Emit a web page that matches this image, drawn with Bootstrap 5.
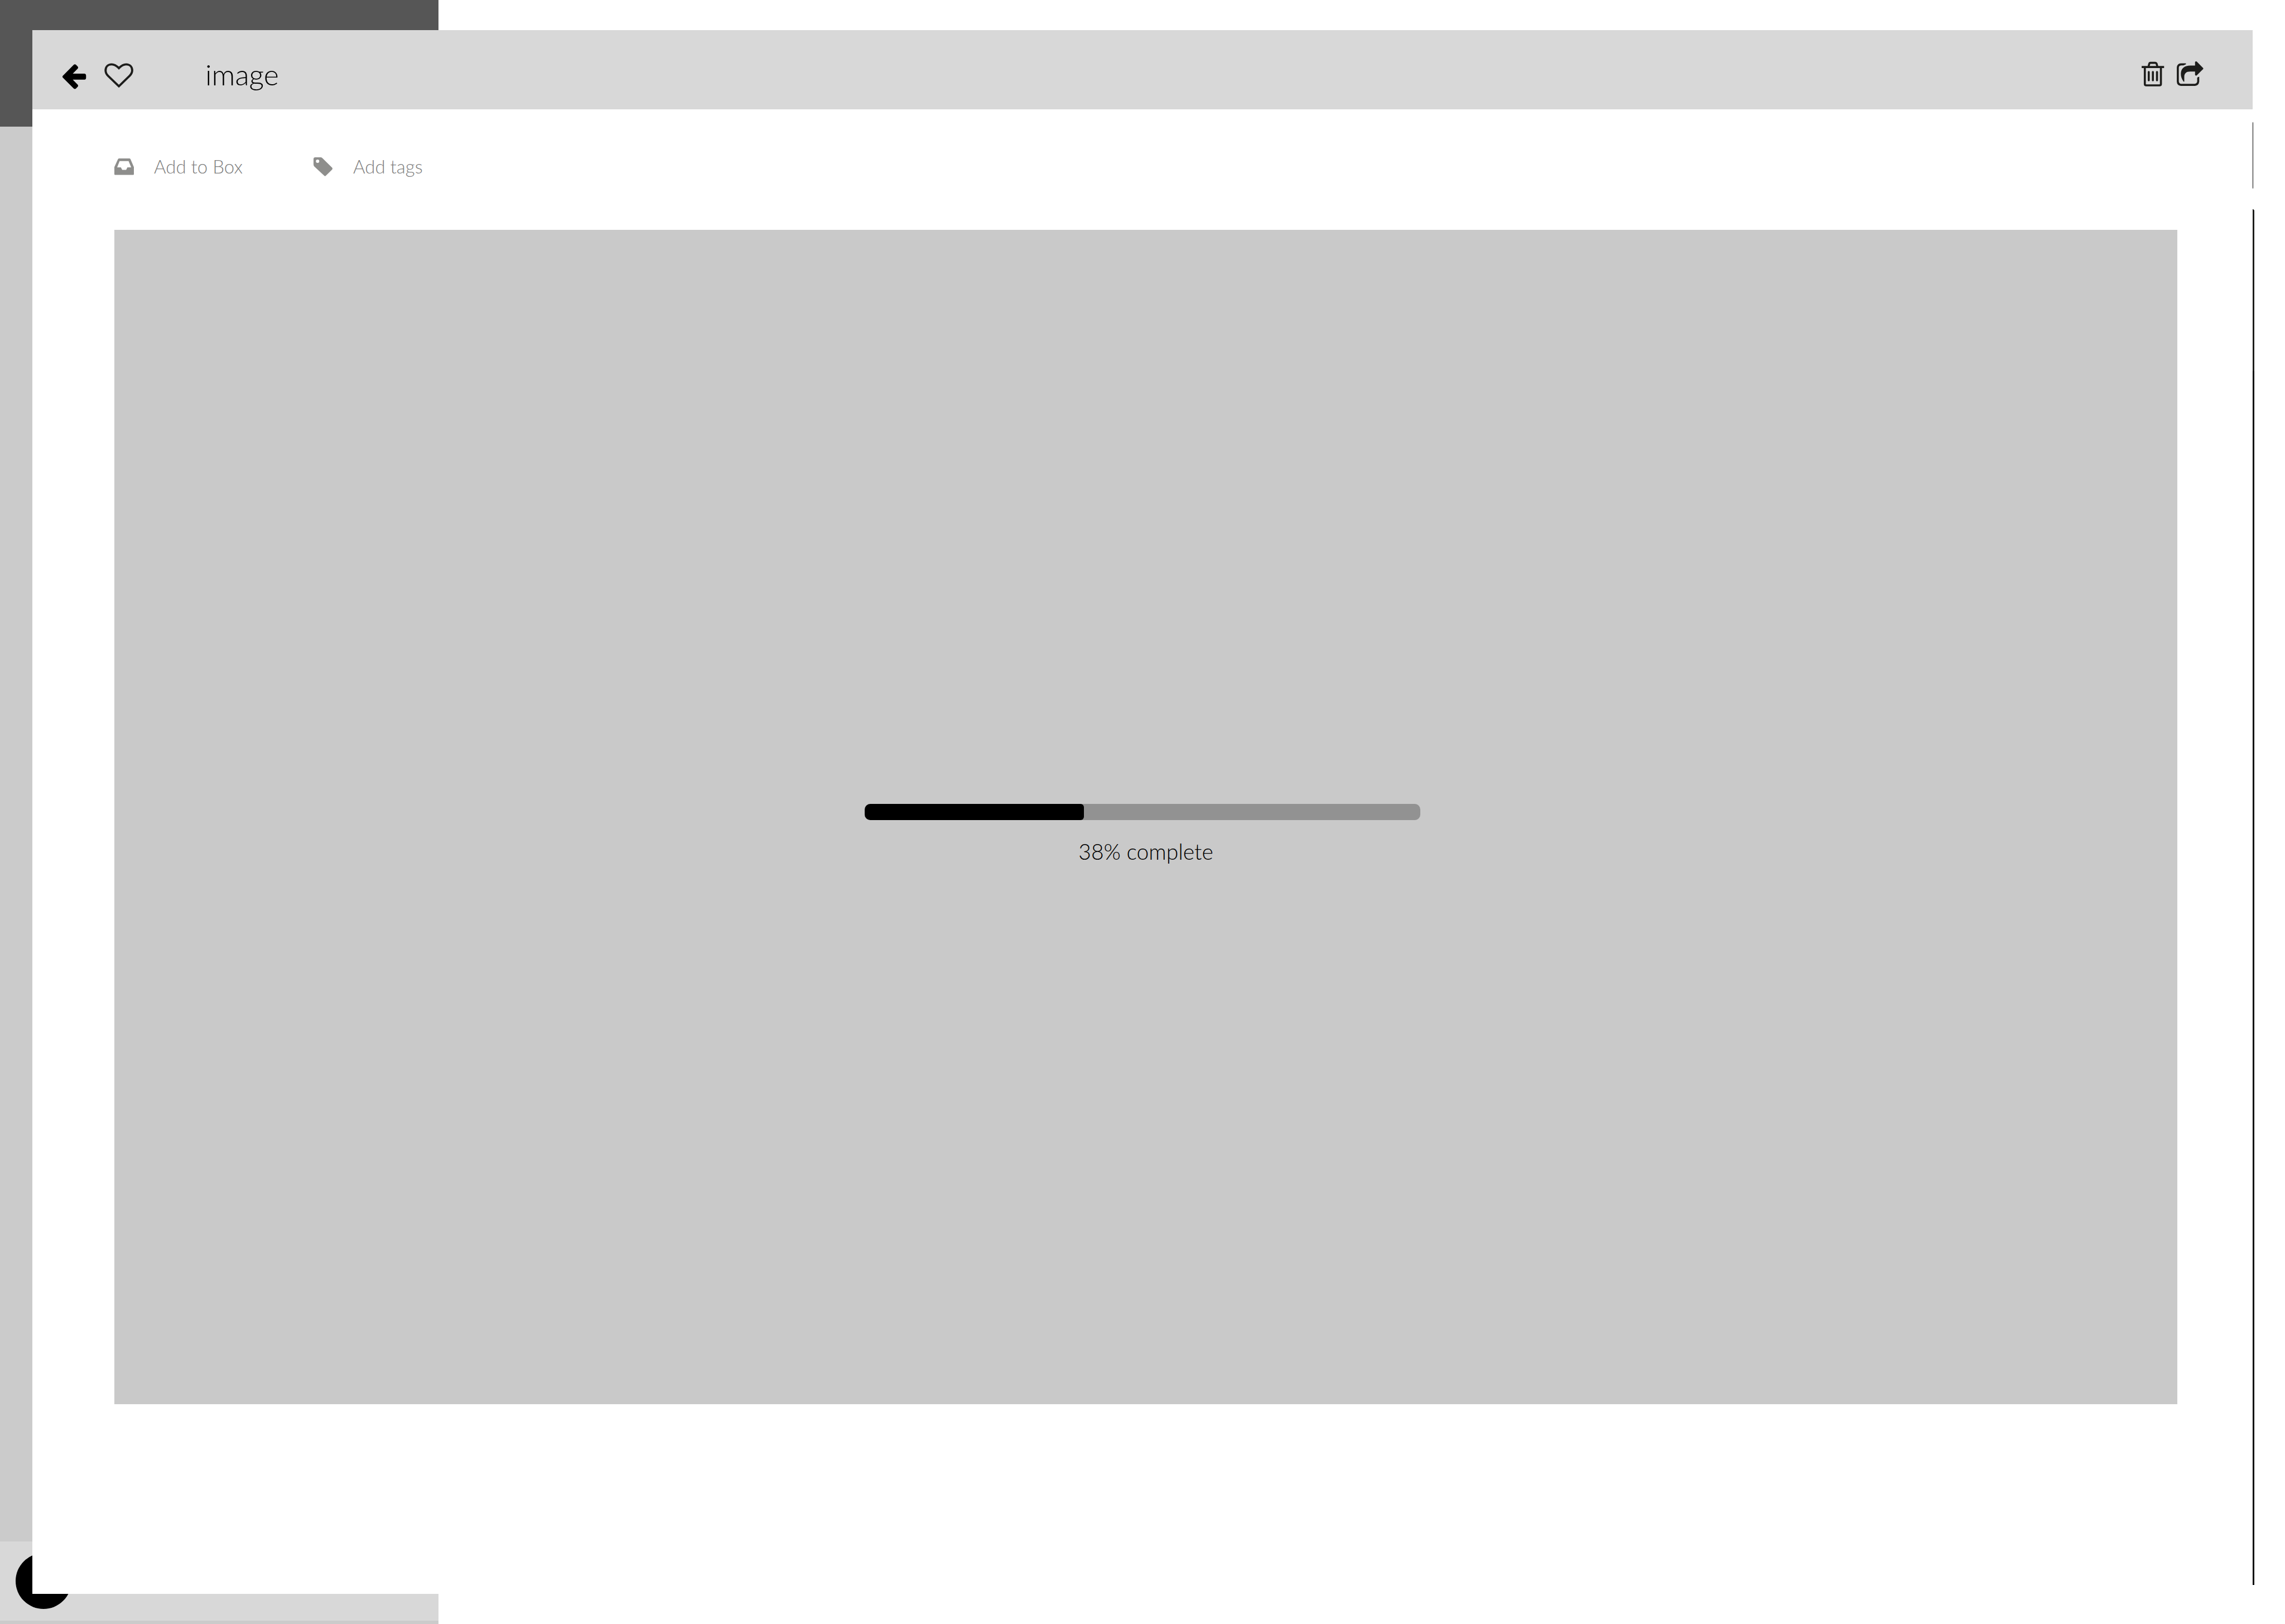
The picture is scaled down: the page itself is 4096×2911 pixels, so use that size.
<!DOCTYPE html>
<html lang="en">
<head>
<meta charset="utf-8">
<meta name="viewport" content="width=device-width, initial-scale=1">
<title>image</title>
<link href="https://cdn.jsdelivr.net/npm/bootstrap@5.3.0/dist/css/bootstrap.min.css" rel="stylesheet">
<style>
  body { font-family: Lato, "Liberation Sans", sans-serif; font-weight: 300; color: #000; background: #fff; }
  .btn { --bs-btn-padding-x: 0; --bs-btn-padding-y: 0; --bs-btn-border-width: 0; --bs-btn-font-weight: 300; --bs-btn-line-height: 1.2; --bs-btn-color: #1d1d1b; }
  svg { display: block; flex: none; }

  /* page behind the sheet */
  .side-pane { width: 786px; background: #cbcbcb; }
  .side-head { height: 227px; background: #565656; }
  .side-foot { height: 148px; background: #d8d8d8; border-bottom: 6px solid #cbcbcb; padding: 21px 28px; }
  .round-btn { width: 100px; height: 100px; background: #000; }
  .rail { padding: 218px 55px 70px 0; gap: 36px; }
  .rail-search { width: 12px; height: 121px; margin-right: 2px; background: #000; border-radius: 3px; }
  .rail-list { width: 12px; background: #000; border-radius: 4px 4px 0 0; overflow: hidden; }
  .rail-thumb { height: 290px; background: #1d1d1b; }

  /* sheet */
  .sheet { inset: 54px 58px; background: #fff; }
  .sheet-head { height: 142px; background: #d8d8d8; padding: 20px 88px 0 54px; }
  .head-left { gap: 32px; }
  .head-right { gap: 22px; }
  .sheet-title { font-size: 52px; line-height: 62px; font-weight: 300; margin-left: 97px; }
  .sheet-tools { height: 216px; padding: 0 147px 10px; gap: 127px; }
  .tool-btn { --bs-btn-color: #7f7f7f; --bs-btn-font-size: 33px; gap: 36px; }
  .tool-btn svg { fill: #8e8e8c; }
  .preview { margin: 0 135px 340px 147px; background: #c9c9c9; padding-top: 62px; }
  .upload-bar { --bs-progress-height: 29px; --bs-progress-bg: #929292; --bs-progress-border-radius: 10px; --bs-progress-bar-bg: #000; width: 996px; margin-right: 12px; }
  .upload-bar .progress-bar { border-radius: 6px; }
  .upload-text { font-size: 39px; line-height: 48px; margin-top: 32px; }
</style>
<script src="https://cdn.jsdelivr.net/npm/bootstrap@5.3.0/dist/js/bootstrap.bundle.min.js"></script>
</head>
<body>
<div class="vh-100 position-relative overflow-hidden">
  <div class="h-100 d-flex justify-content-between">
    <aside class="side-pane d-flex flex-column">
      <div class="side-head"></div>
      <div class="side-foot mt-auto">
        <button type="button" class="btn round-btn rounded-circle" aria-label="Add"></button>
      </div>
    </aside>
    <div class="rail d-flex flex-column align-items-end">
      <div class="rail-search"></div>
      <div class="rail-list flex-grow-1"><div class="rail-thumb"></div></div>
    </div>
  </div>

  <main class="sheet position-absolute d-flex flex-column">
    <header class="sheet-head d-flex align-items-center justify-content-between">
      <div class="head-left d-flex align-items-center">
        <button type="button" class="btn" aria-label="Back">
          <svg width="43" height="52" viewBox="101 89 189 229"><path d="M103 208 190 120Q198 113 207 120L221 134Q228 142 221 151L182 190H273Q287 191 287 206V222Q287 237 275 238H182L221 277Q228 285 221 294L207 308Q198 315 190 308L103 221Q98 214 103 208Z"/></svg>
        </button>
        <button type="button" class="btn" aria-label="Favourite">
          <svg width="52" height="52" viewBox="431 89 229 229"><path fill="none" stroke="#1d1d1b" stroke-width="17" d="M546 290 460 207C445 192 441 182 441 165C441 136 460 117 489 117C511 117 524 125 546 147C568 125 581 117 603 117C632 117 651 136 651 165C651 182 645 193 631 207Z"/></svg>
        </button>
        <h1 class="sheet-title mb-0 pb-1">image</h1>
      </div>
      <div class="head-right d-flex align-items-center">
        <button type="button" class="btn" aria-label="Delete">
          <svg width="41" height="52" viewBox="84 89 180 229"><g fill="none" stroke="#1d1d1b" stroke-width="16"><path d="M84 138H261M137 138 144 112Q146 105 153 105H191Q199 105 202 112L209 138M109 138V272Q109 283 120 283H225Q236 283 236 272V138"/><path stroke-linecap="round" d="M140 177V243M172.500 177V243M205 177V243"/></g></svg>
        </button>
        <button type="button" class="btn" aria-label="Share">
          <svg width="48" height="52" viewBox="360 89 211 229"><g fill="#1d1d1b"><path d="M432 109V116L412 125H394Q376 127 376 144V252Q378 270 395 271H501Q518 269 521 252V223Q523 216 537 214V254Q533 284 503 287H393Q362 284 360 254V141Q363 111 393 109Z"/><path d="M504 126V99Q509 90 517 95L568 146Q571 150 568 154L518 204Q509 210 504 200V174H466C434 174 420 189 419 213V253Q416 257 411 250C397 228 392 212 392 191C393 147 421 126 467 126Z"/></g></svg>
        </button>
      </div>
    </header>

    <div class="sheet-tools d-flex align-items-center">
      <button type="button" class="btn tool-btn d-flex align-items-center">
        <svg width="35" height="30" viewBox="0 0 35 30"><path fill-rule="evenodd" d="M8 0H27.500L28.800 1 35 15.500V28.500L34.200 29.500H.8L0 28.500V15.500L6.600 1ZM9.400 4.800 5 16H11.700L14.100 20.500H21.100L23.400 16H30.200L25.500 4.800Z"/></svg>
        Add to Box
      </button>
      <button type="button" class="btn tool-btn d-flex align-items-center">
        <svg width="35" height="34" viewBox="0 0 35 34"><path fill-rule="evenodd" d="M2.500 0H12.500Q14.500 0 16 1.400L33.300 18.500Q34.700 20.200 33.300 21.900L22 33Q20.700 34.300 19.300 33L1.500 16.500Q0 15 0 12.500V2.500Q.2.200 2.500 0ZM7.300 4A3 3 0 1 0 7.300 10 3 3 0 1 0 7.300 4Z"/></svg>
        Add tags
      </button>
    </div>

    <section class="preview flex-grow-1 d-flex flex-column align-items-center justify-content-center">
      <div class="progress upload-bar" role="progressbar" aria-label="Upload" aria-valuenow="38" aria-valuemin="0" aria-valuemax="100">
        <div class="progress-bar" style="width: 39.5%"></div>
      </div>
      <p class="upload-text mb-0">38% complete</p>
    </section>
  </main>
</div>
</body>
</html>
